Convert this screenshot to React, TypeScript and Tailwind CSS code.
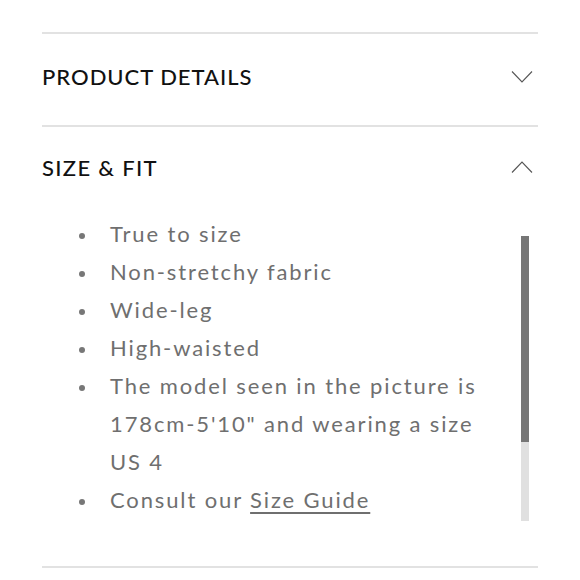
import React from 'react';

const ITEMS: React.ReactNode[] = [
  'True to size',
  'Non-stretchy fabric',
  'Wide-leg',
  'High-waisted',
  'The model seen in the picture is 178cm-5\'10" and wearing a size US 4',
  <>
    Consult our <a className="underline underline-offset-[4px] decoration-[1.5px]">Size Guide</a>
  </>,
];

function Chevron({ up = false }: { up?: boolean }) {
  return (
    <svg width="22" height="12" viewBox="0 0 22 12" fill="none" className="shrink-0">
      <path
        d={up ? 'M1 11.5 L11 1 L21 11.5' : 'M1 0.5 L11 11 L21 0.5'}
        stroke="#555"
        strokeWidth="1.1"
      />
    </svg>
  );
}

export default function App() {
  return (
    <div
      className="w-[580px] h-[580px] bg-white px-[42px] pt-[32px]"
      style={{ fontFamily: 'Lato, "Liberation Sans", sans-serif' }}
    >
      <div className="border-t-2 border-[#e2e2e2]">
        <div className="h-[91px] flex items-center justify-between pr-[5px] pb-[6px]">
          <span className="text-[22px] tracking-[0.045em] text-[#111] font-medium">PRODUCT DETAILS</span>
          <Chevron />
        </div>
      </div>

      <div className="border-t-2 border-[#e2e2e2]">
        <div className="h-[84px] flex items-center justify-between pr-[5px] pb-[4px]">
          <span className="text-[22px] tracking-[0.06em] text-[#111] font-medium">SIZE &amp; FIT</span>
          <Chevron up />
        </div>

        <div className="flex pt-[4px] h-[355px]">
          <ul className="w-[458px] text-[22px] leading-[38px] tracking-[0.085em] text-[#6f6f6f]">
            {ITEMS.map((item, i) => (
              <li key={i} className="grid grid-cols-[68px_1fr]">
                <span className="pl-[37px] pt-[18px]">
                  <span className="block w-[6px] h-[6px] rounded-full bg-[#777]" />
                </span>
                <span>{item}</span>
              </li>
            ))}
          </ul>
          <div className="ml-auto mr-[9px] mt-[21px] w-[8px] h-[285px] bg-[#e0e0e0]">
            <div className="h-[206px] bg-[#767676]" />
          </div>
        </div>
      </div>

      <div className="border-t-2 border-[#e2e2e2]" />
    </div>
  );
}
